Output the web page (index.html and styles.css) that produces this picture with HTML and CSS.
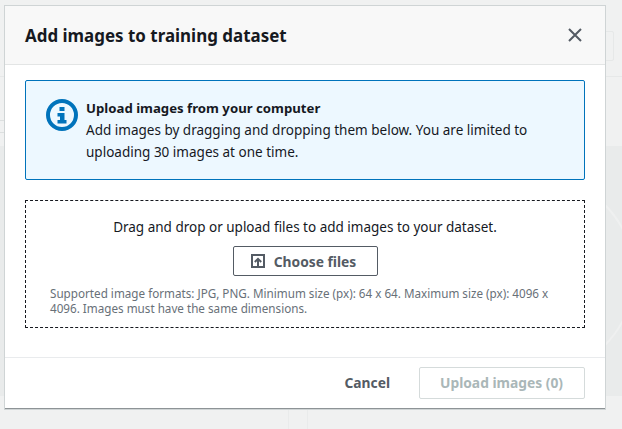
FILE: index.html
```html
<!DOCTYPE html>
<html lang="en">
<head>
<meta charset="utf-8">
<title>Add images to training dataset</title>
<link rel="stylesheet" href="styles.css">
</head>
<body>
<div class="backdrop">
  <div class="bg-lines"></div>
  <div class="bg-band"></div>
  <div class="bg-ring"></div>
  <div class="bg-box"></div>
  <div class="bg-left-box"></div>
  <div class="bg-col"></div>
  <div class="modal">
    <header class="modal-header">
      <h2 class="modal-title">Add images to training dataset</h2>
      <svg class="close-icon" width="16" height="16" viewBox="0 0 16 16"><path d="M2 2l12 12M14 2L2 14" fill="none" stroke="#545b64" stroke-width="2"/></svg>
    </header>
    <div class="modal-body">
      <section class="alert">
        <svg class="alert-icon" width="32" height="32" viewBox="0 0 32 32"><circle cx="16" cy="16" r="14" fill="none" stroke="#0073bb" stroke-width="4"/><rect x="13.500" y="8" width="5" height="4" fill="#0073bb"/><path d="M11.500 14h7v7h2v3.500h-9V21h2.500v-3.500h-2.500z" fill="#0073bb"/></svg>
        <div class="alert-text">
          <div class="alert-title">Upload images from your computer</div>
          <div>Add images by dragging and dropping them below. You are limited to uploading 30 images at one time.</div>
        </div>
      </section>
      <section class="dropzone">
        <p class="drop-text">Drag and drop or upload files to add images to your dataset.</p>
        <button class="choose-btn" type="button">
          <svg width="16" height="16" viewBox="0 0 16 16"><path d="M2 2h12v12H2z" fill="none" stroke="#545b64" stroke-width="2"/><path d="M8 14V6M4.800 9L8 5.800 11.200 9" fill="none" stroke="#545b64" stroke-width="2"/></svg>
          <span>Choose files</span>
        </button>
        <p class="hint">Supported image formats: JPG, PNG. Minimum size (px): 64 x 64. Maximum size (px): 4096 x 4096. Images must have the same dimensions.</p>
      </section>
    </div>
    <footer class="modal-footer">
      <button class="cancel-btn" type="button">Cancel</button>
      <button class="upload-btn" type="button" disabled>Upload images (0)</button>
    </footer>
  </div>
</div>
</body>
</html>
```
FILE: styles.css
```css
* { box-sizing: border-box; }
html, body { margin: 0; height: 100%; }
body { font-family: "Noto Sans", sans-serif; color: #16191f; background: #f0f1f1; overflow: hidden; }
.backdrop { position: relative; width: 622px; height: 429px; padding: 6px 17px 0 5px; background: #f0f1f1; overflow: hidden; }
.bg-lines { position: absolute; left: 0; right: 0; top: 31px; height: 46px; border-bottom: 1px solid #e6e8e8; }
.bg-band { position: absolute; left: 0; right: 0; top: 146px; height: 250px; background: #e9ebeb; }
.bg-ring { position: absolute; left: 435px; top: 175px; width: 200px; height: 200px; border: 2px solid #eff0f0; border-radius: 50%; }
.bg-box { position: absolute; left: 600px; top: 31px; width: 14px; height: 30px; border: 1px solid #e6e8e8; border-radius: 2px; }
.bg-left-box { position: absolute; left: -10px; top: 120px; width: 15px; height: 13px; border: 1px solid #dcdfdf; }
.bg-col { position: absolute; left: 288px; top: 400px; width: 20px; height: 29px; border-left: 1px solid #e9ebeb; border-right: 1px solid #e9ebeb; }
.modal { position: relative; width: 600px; height: 403px; background: #fff; display: flex; flex-direction: column; border-bottom: 1px solid #8d9396; box-shadow: 0 0 0 1px #cfd4d5; }
.modal-header { height: 59px; flex: none; display: flex; align-items: center; justify-content: space-between; padding: 1px 22px 0 20px; background: #f8f8f8; border-bottom: 1px solid #e3e5e5; }
.modal-title { margin: 0; font-size: 16.950px; font-weight: 700; line-height: 22px; }
.close-icon { display: block; margin-top: -1px; }
.modal-body { flex: 1; padding: 15px 20px 0; display: flex; flex-direction: column; gap: 20px; }
.alert { height: 100px; flex: none; display: flex; gap: 8px; padding: 16px 20px; background: #edf8ff; border: 1px solid #0073bb; border-radius: 2px; font-size: 13.530px; line-height: 22px; }
.alert-icon { flex: none; margin-top: 2px; }
.alert-title { font-weight: 700; font-size: 13.200px; }
.dropzone { height: 128px; flex: none; display: flex; flex-direction: column; align-items: center; padding: 16px 24px 0; border: 1px dashed #16191f; }
.drop-text { margin: 0; font-size: 13.500px; line-height: 20px; }
.choose-btn { margin-top: 9px; width: 145px; height: 30px; display: flex; align-items: center; justify-content: center; gap: 8px; padding: 0 6px 0 2px; background: #fff; border: 1px solid #545b64; border-radius: 2px; font: 700 13.800px "Noto Sans", sans-serif; color: #545b64; }
.hint { align-self: stretch; margin: 10px 0 0; font-size: 11.680px; line-height: 15px; color: #687078; }
.modal-footer { height: 51px; flex: none; display: flex; justify-content: flex-end; align-items: center; gap: 29px; padding: 0 20px 1px; border-top: 1px solid #e9ebed; }
.cancel-btn { background: none; border: 0; padding: 0; font: 700 13.800px "Noto Sans", sans-serif; color: #545b64; }
.upload-btn { width: 166px; height: 32px; padding: 0 1px 0 0; background: #fff; border: 1px solid #d5dbdb; border-radius: 2px; font: 700 13.800px "Noto Sans", sans-serif; color: #aab7b8; }
```
